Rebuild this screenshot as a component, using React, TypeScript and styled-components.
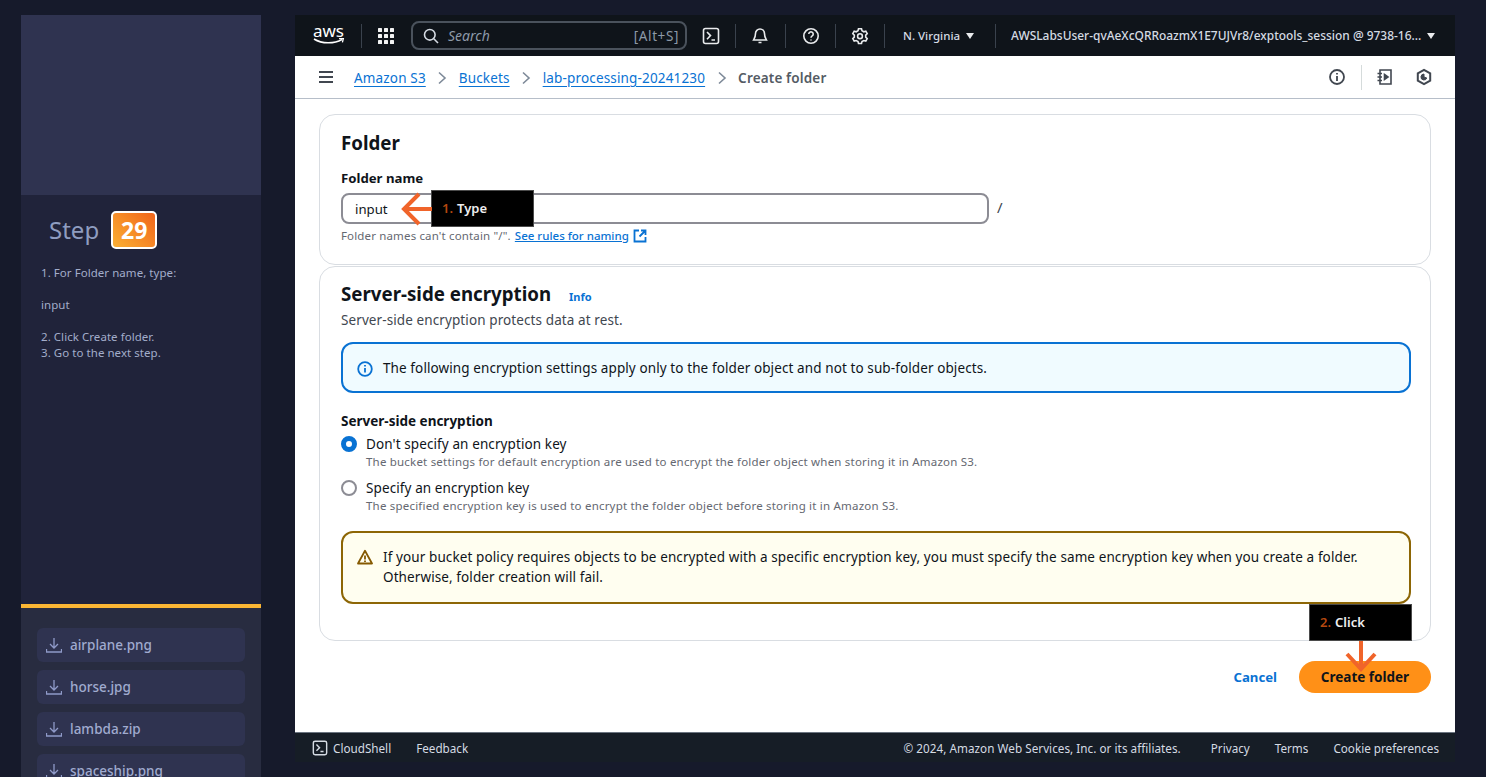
import React from "react";
import styled, { createGlobalStyle } from "styled-components";

const Global = createGlobalStyle`
  html, body { margin: 0; padding: 0; height: 100%; background: #161a2b; overflow: hidden; }
  body { font-family: "Noto Sans", "Open Sans", sans-serif; }
  * { box-sizing: border-box; }
`;

const Page = styled.div`
  display: flex; gap: 34px; height: 777px; overflow: hidden; padding: 15px 31px 0 21px;
`;
const Sidebar = styled.aside`
  width: 240px; flex: none; display: flex; flex-direction: column; height: 790px;
`;
const Banner = styled.div`height: 180px; flex: none; background: #2f3350;`;
const StepPanel = styled.section`
  height: 409px; flex: none; background: #20233a; padding: 16px 20px 0 20px; color: #9aa5c4;
`;
const StepHead = styled.div`display: flex; align-items: center; gap: 12px; padding-left: 8px; height: 38px;`;
const StepWord = styled.span`font-size: 24px; color: #8f9dc0; line-height: 38px;`;
const StepBadge = styled.span`
  width: 46px; height: 38px; border: 2px solid #fff; border-radius: 5px;
  background: linear-gradient(45deg, #fbb034, #f0641a);
  color: #fff; font-weight: 700; font-size: 23px; display: flex; align-items: center; justify-content: center;
`;
const StepLines = styled.div`margin-top: 16px; font-size: 11.5px; letter-spacing: .05px; line-height: 16px; color: #a3adca;`;
const StepLine = styled.div<{ $gap?: boolean }>`margin-bottom: ${p => (p.$gap ? 16 : 0)}px;`;
const FilePanel = styled.section`
  flex: 1; background: #282c40; border-top: 4px solid #fbb634; padding: 20px 16px 0;
  display: flex; flex-direction: column; gap: 8px;
`;
const FileRow = styled.div`
  height: 34px; flex: none; border-radius: 6px; background: #2f3350; display: flex; align-items: center;
  gap: 8px; padding-left: 9px; color: #a0abcf; font-size: 13.5px; font-weight: 500;
`;
const Main = styled.main`
  width: 1160px; flex: none; display: flex; flex-direction: column; height: 747px; position: relative;
`;
const TopNav = styled.header`
  height: 41px; flex: none; background: #0f141a; display: flex; align-items: center; color: #d5dbe3;
`;
const Logo = styled.div`
  width: 33px; margin-left: 17px; display: flex; flex-direction: column; align-items: center;
  color: #fff; font-size: 17px; line-height: 14px; position: relative; top: -1px;
`;
const NavRule = styled.span<{ $h?: number; $m?: string }>`
  width: 1px; height: ${p => p.$h ?? 24}px; background: #3a424d; margin: ${p => p.$m ?? "0"}; flex: none;
`;
const SearchBox = styled.div`
  width: 276px; height: 29px; border: 2px solid #4a525c; border-radius: 8px; background: #0f141a;
  display: flex; align-items: center; padding: 0 6px 0 10px; gap: 9px; margin-left: 17px; margin-right: 15px;
`;
const SearchPh = styled.span`font-style: italic; font-size: 14px; color: #8d99a8; flex: 1;`;
const SearchKey = styled.span`font-size: 13.5px; letter-spacing: .6px; color: #8d99a8;`;
const NavIconBox = styled.span`display: flex; width: 18px; height: 18px; flex: none; color: #e9ebed;`;
const Region = styled.span<{ $wide?: boolean }>`
  font-size: ${p => (p.$wide ? 11.95 : 11.5)}px; font-weight: 500; color: #d5dbe3; white-space: nowrap;
`;
const Caret = styled.span`
  width: 0; height: 0; border-left: 4.5px solid transparent; border-right: 4.5px solid transparent;
  border-top: 6px solid #e9ebed; flex: none; margin-left: 6px;
`;
const Content = styled.div`
  flex: none; height: 676px; background: #fff; display: flex; flex-direction: column; position: relative;
`;
const CrumbBar = styled.div`
  height: 43px; flex: none; border-bottom: 1px solid #b6bec9; display: flex; align-items: center; padding: 0 22px 0 23px;
`;
const Crumbs = styled.nav`
  display: flex; align-items: center; margin-left: 20px; flex: 1; font-size: 13.5px; letter-spacing: .16px; padding-top: 1px;
`;
const Crumb = styled.a`color: #0972d3; text-decoration: underline; text-underline-offset: 3px; white-space: nowrap;`;
const CrumbCurrent = styled.span`color: #545b64; font-weight: 600; white-space: nowrap;`;
const CrumbSep = styled.span`display: flex; width: 33px; justify-content: center; color: #7d8998;`;
const BarTools = styled.div`display: flex; align-items: center; gap: 14px; color: #414750;`;
const ToolIcon = styled.span<{ $ml?: number; $mr?: number }>`
  display: flex; width: 18px; height: 18px; margin-left: ${p => p.$ml ?? 0}px; margin-right: ${p => p.$mr ?? 0}px;
`;
const ToolRule = styled.span`width: 1px; height: 25px; background: #d5dbdb;`;
const Body = styled.div`padding: 15px 24px 0; display: flex; flex-direction: column; flex: 1;`;
const Card = styled.section<{ $h: number; $top: number }>`
  height: ${p => p.$h}px; flex: none; border: 1px solid #d9dde2; border-radius: 16px; padding: ${p => p.$top}px 21px 0;
  margin-bottom: 1px; color: #0f141a;
`;
const CardTitle = styled.h2`margin: 0; font-size: 18.7px; line-height: 26px; font-weight: 700; color: #0f141a;`;
const TitleRow = styled.div`display: flex; align-items: baseline; gap: 18px;`;
const InfoLink = styled.a`color: #0972d3; font-size: 11px; font-weight: 700;`;
const FieldLabel = styled.div`font-size: 13.2px; line-height: 16px; font-weight: 700; color: #0f141a; margin-top: 14px;`;
const InputRow = styled.div`display: flex; align-items: center; gap: 8px; margin-top: 7px; position: relative;`;
const NameInput = styled.div`
  width: 648px; height: 31px; border: 2px solid #8c8c94; border-radius: 8px; display: flex; align-items: center;
  padding-left: 12px; font-size: 13.2px; color: #0f141a;
`;
const Slash = styled.span`font-size: 15px; color: #414750; position: relative; top: -2px;`;
const Hint = styled.div`margin-top: 5px; font-size: 11.5px; letter-spacing: .15px; line-height: 14px; color: #656871; display: flex; align-items: center; gap: 4px;`;
const HintLink = styled.a`color: #0972d3; text-decoration: underline; font-weight: 500; letter-spacing: 0;`;
const Desc = styled.p`margin: 4px 0 0; font-size: 13.5px; letter-spacing: .1px; line-height: 18px; color: #414750;`;
const Alert = styled.div<{ $warn?: boolean }>`
  width: 1070px; margin-top: ${p => (p.$warn ? 17 : 13)}px; height: ${p => (p.$warn ? 73 : 51)}px;
  border: 2px solid ${p => (p.$warn ? "#8d6605" : "#0972d3")}; border-radius: 12px;
  background: ${p => (p.$warn ? "#fffef0" : "#f0fbff")};
  display: flex; align-items: ${p => (p.$warn ? "flex-start" : "center")}; gap: 10px;
  padding: ${p => (p.$warn ? "14px" : "0")} 14px 0 14px; font-size: 13.5px; letter-spacing: .1px; line-height: 20px; color: #0f141a;
`;
const AlertIcon = styled.span`display: flex; width: 16px; height: 16px; flex: none; margin-top: 2px;`;
const GroupLabel = styled.div`font-size: 13.5px; line-height: 16px; font-weight: 700; margin-top: 20px; color: #0f141a;`;
const RadioRow = styled.div<{ $first?: boolean }>`
  display: flex; gap: 9px; margin-top: ${p => (p.$first ? 5 : 8)}px;
`;
const Radio = styled.span<{ $on?: boolean }>`
  width: 16px; height: 16px; border-radius: 50%; flex: none; margin-top: 2px; background: #fff;
  border: ${p => (p.$on ? "5px solid #0972d3" : "2px solid #8c8c94")};
`;
const RadioText = styled.div`display: flex; flex-direction: column;`;
const RadioTitle = styled.span`font-size: 13.5px; letter-spacing: .1px; line-height: 20px; color: #0f141a;`;
const RadioHelp = styled.span`font-size: 11.5px; letter-spacing: .2px; line-height: 16px; color: #656871; white-space: nowrap;`;
const Actions = styled.div`display: flex; justify-content: flex-end; align-items: center; gap: 22px; margin-top: 19px;`;
const Cancel = styled.a`color: #0972d3; font-size: 13.2px; font-weight: 700;`;
const Primary = styled.button`
  width: 132px; height: 32px; border: 0; border-radius: 16px; background: #ff9017; color: #0f141a;
  font: 700 13.5px "Noto Sans", sans-serif; padding: 0;
`;
const Footer = styled.footer`
  height: 30px; flex: none; background: #161d26; border-top: 1px solid #6b7480; display: flex; align-items: center;
  padding: 0 16px 0 17px; font-size: 11.7px; color: #d5dbe3; white-space: nowrap;
`;
const FooterShell = styled.span`display: flex; align-items: center; gap: 5px; margin-right: 25px;`;
const Spacer = styled.span`flex: 1;`;
const Copyright = styled.span`letter-spacing: .04px;`;
const FooterItem = styled.span<{ $m?: number }>`margin-left: ${p => p.$m ?? 0}px;`;
const Callout = styled.div<{ $x: number; $y: number; $h: number; $w: number }>`
  position: absolute; left: ${p => p.$x}px; top: ${p => p.$y}px; width: ${p => p.$w}px; height: ${p => p.$h}px;
  background: #000; border: 1px solid #4b4b4b; color: #eee; font-size: 13px; font-weight: 600;
  display: flex; align-items: center; padding: 0 0 2px 10px; gap: 4px; z-index: 3;
`;
const CalloutNum = styled.span`color: #b5480f;`;
const ArrowSvg = styled.svg<{ $x: number; $y: number }>`
  position: absolute; left: ${p => p.$x}px; top: ${p => p.$y}px; z-index: 4; overflow: visible;
`;

const ShellIcon = ({ size = 18 }: { size?: number }) => (
  <svg width={size} height={size} viewBox="0 0 18 18" fill="none" stroke="currentColor" strokeWidth="1.6">
    <rect x="1.5" y="1.5" width="15" height="15" rx="2" />
    <path d="M5 5l3.5 3.6L5 12.2M9.5 13h3.5" />
  </svg>
);
const DownloadIcon = () => (
  <svg width="16" height="16" viewBox="0 0 16 16" fill="none" stroke="#8f9ac8" strokeWidth="1.3">
    <path d="M8 1v9.500M4 7l4 4 4-4M.5 12v3h15v-3" />
  </svg>
);
const Sep = () => (
  <CrumbSep>
    <svg width="10" height="14" viewBox="0 0 10 14" fill="none" stroke="currentColor" strokeWidth="1.6"><path d="M2 1.500 8 7l-6 5.500" /></svg>
  </CrumbSep>
);
const files = ["airplane.png", "horse.jpg", "lambda.zip", "spaceship.png"];

export default function App() {
  return (
    <>
      <Global />
      <Page>
        <Sidebar>
          <Banner />
          <StepPanel>
            <StepHead>
              <StepWord>Step</StepWord>
              <StepBadge>29</StepBadge>
            </StepHead>
            <StepLines>
              <StepLine $gap>1. For Folder name, type:</StepLine>
              <StepLine $gap>input</StepLine>
              <StepLine>2. Click Create folder.</StepLine>
              <StepLine>3. Go to the next step.</StepLine>
            </StepLines>
          </StepPanel>
          <FilePanel>
            {files.map(f => (
              <FileRow key={f}><DownloadIcon />{f}</FileRow>
            ))}
          </FilePanel>
        </Sidebar>
        <Main>
          <TopNav>
            <Logo>
              aws
              <svg width="32" height="7" viewBox="0 0 32 7" fill="none">
                <path d="M1 1c8 5 20 5 28 .5" stroke="#fff" strokeWidth="1.6" />
                <path d="M26 .6l4.400-.2-1 4" stroke="#fff" strokeWidth="1.3" />
              </svg>
            </Logo>
            <NavRule $m="0 16px 0 16px" />
            <svg width="16" height="16" viewBox="0 0 16 16" fill="#f2f3f3" style={{ flex: "none" }}>
              {[0, 6, 12].flatMap(y => [0, 6, 12].map(x => <rect key={`${x}-${y}`} x={x} y={y} width="4" height="4" rx=".6" />))}
            </svg>
            <SearchBox>
              <svg width="16" height="16" viewBox="0 0 16 16" fill="none" stroke="#d5dbe3" strokeWidth="1.6" style={{ flex: "none" }}>
                <circle cx="6.800" cy="6.800" r="5.300" /><path d="m10.800 10.800 4.200 4.200" />
              </svg>
              <SearchPh>Search</SearchPh>
              <SearchKey>[Alt+S]</SearchKey>
            </SearchBox>
            <NavIconBox><ShellIcon /></NavIconBox>
            <NavRule $m="0 15px 0 15px" />
            <NavIconBox>
              <svg width="18" height="18" viewBox="0 0 18 18" fill="none" stroke="currentColor" strokeWidth="1.6">
                <path d="M9 2a4.500 4.500 0 0 0-4.500 4.500c0 4-1.500 5.500-2 6.500h13c-.5-1-2-2.500-2-6.500A4.500 4.500 0 0 0 9 2zM7.500 15.500h3" />
              </svg>
            </NavIconBox>
            <NavRule $m="0 16px 0 16px" />
            <NavIconBox>
              <svg width="18" height="18" viewBox="0 0 18 18" fill="none" stroke="currentColor" strokeWidth="1.6">
                <circle cx="9" cy="9" r="7.200" /><path d="M6.800 7a2.200 2.200 0 1 1 3.400 1.900C9.400 9.400 9 9.900 9 10.800M9 12.400v1.200" />
              </svg>
            </NavIconBox>
            <NavRule $m="0 15px 0 15px" />
            <NavIconBox>
              <svg width="18" height="18" viewBox="0 0 18 18" fill="none" stroke="currentColor" strokeWidth="1.600">
                <path d="M7.500 1.800h3l.5 2 1.800 1 2-.6 1.400 2.500-1.500 1.500v1.900l1.500 1.500-1.400 2.500-2-.6-1.800 1-.5 2h-3l-.5-2-1.800-1-2 .6-1.400-2.500 1.500-1.500V8.200L1.800 6.700l1.400-2.500 2 .6 1.800-1z" />
                <circle cx="9" cy="9.200" r="2.400" />
              </svg>
            </NavIconBox>
            <NavRule $m="0 18px 0 15px" />
            <Region>N. Virginia</Region>
            <Caret />
            <NavRule $m="0 15px 0 21px" />
            <Region $wide>AWSLabsUser-qvAeXcQRRoazmX1E7UJVr8/exptools_session @ 9738-16...</Region>
            <Caret />
          </TopNav>
          <Content>
            <CrumbBar>
              <svg width="16" height="14" viewBox="0 0 16 14" stroke="#414750" strokeWidth="2" style={{ flex: "none" }}>
                <path d="M1 2h14M1 7h14M1 12h14" />
              </svg>
              <Crumbs>
                <Crumb>Amazon S3</Crumb><Sep />
                <Crumb>Buckets</Crumb><Sep />
                <Crumb>lab-processing-20241230</Crumb><Sep />
                <CrumbCurrent>Create folder</CrumbCurrent>
              </Crumbs>
              <BarTools>
                <ToolIcon $mr={1}>
                  <svg width="18" height="18" viewBox="0 0 18 18" fill="none" stroke="currentColor" strokeWidth="1.800">
                    <circle cx="9" cy="9" r="7" /><path d="M9 8v5M9 5v1.500" />
                  </svg>
                </ToolIcon>
                <ToolRule />
                <ToolIcon>
                  <svg width="18" height="18" viewBox="0 0 18 18" fill="none" stroke="currentColor" strokeWidth="1.600">
                    <path d="M4 2h11v14H4zM1.500 5.500H6M1.500 9H6M1.500 12.500H6" /><path d="M8.500 6.500 12 9l-3.500 2.500z" fill="currentColor" />
                  </svg>
                </ToolIcon>
                <ToolIcon $ml={7}>
                  <svg width="18" height="18" viewBox="0 0 18 18" fill="none" stroke="currentColor" strokeWidth="2">
                    <path d="M9 1.800 15.200 5.400v7.200L9 16.200l-6.200-3.600V5.400z" /><path d="M9 6a3 3 0 1 0 2.800 4L9 9z" fill="currentColor" strokeWidth="1" />
                  </svg>
                </ToolIcon>
              </BarTools>
            </CrumbBar>
            <Body>
              <Card $h={151} $top={15}>
                <CardTitle>Folder</CardTitle>
                <FieldLabel>Folder name</FieldLabel>
                <InputRow>
                  <NameInput>input</NameInput>
                  <Slash>/</Slash>
                </InputRow>
                <Hint>
                  <span>Folder names can't contain "/".</span>
                  <HintLink>See rules for naming</HintLink>
                  <svg width="14" height="14" viewBox="0 0 14 14" fill="none" stroke="#0972d3" strokeWidth="1.800">
                    <path d="M6 1.500H1.500v11h11V8M8 1.500h4.500V6M12.500 1.500 6.500 7.500" />
                  </svg>
                </Hint>
              </Card>
              <Card $h={375} $top={14}>
                <TitleRow>
                  <CardTitle>Server-side encryption</CardTitle>
                  <InfoLink>Info</InfoLink>
                </TitleRow>
                <Desc>Server-side encryption protects data at rest.</Desc>
                <Alert>
                  <AlertIcon>
                    <svg width="16" height="16" viewBox="0 0 16 16" fill="none" stroke="#0972d3" strokeWidth="1.800">
                      <circle cx="8" cy="8" r="6.800" /><path d="M8 7v4.500M8 4v1.600" />
                    </svg>
                  </AlertIcon>
                  <span>The following encryption settings apply only to the folder object and not to sub-folder objects.</span>
                </Alert>
                <GroupLabel>Server-side encryption</GroupLabel>
                <RadioRow $first>
                  <Radio $on />
                  <RadioText>
                    <RadioTitle>Don't specify an encryption key</RadioTitle>
                    <RadioHelp>The bucket settings for default encryption are used to encrypt the folder object when storing it in Amazon S3.</RadioHelp>
                  </RadioText>
                </RadioRow>
                <RadioRow>
                  <Radio />
                  <RadioText>
                    <RadioTitle>Specify an encryption key</RadioTitle>
                    <RadioHelp>The specified encryption key is used to encrypt the folder object before storing it in Amazon S3.</RadioHelp>
                  </RadioText>
                </RadioRow>
                <Alert $warn>
                  <AlertIcon>
                    <svg width="16" height="16" viewBox="0 0 16 16" fill="none" stroke="#855900" strokeWidth="1.800">
                      <path d="M8 1.800 15 14.500H1z" strokeLinejoin="round" /><path d="M8 6.500v4M8 11.500v1.500" />
                    </svg>
                  </AlertIcon>
                  <span>If your bucket policy requires objects to be encrypted with a specific encryption key, you must specify the same encryption key when you create a folder.<br />Otherwise, folder creation will fail.</span>
                </Alert>
              </Card>
              <Actions>
                <Cancel>Cancel</Cancel>
                <Primary>Create folder</Primary>
              </Actions>
            </Body>
            <Callout $x={136} $y={134} $w={103} $h={37}><CalloutNum>1.</CalloutNum> Type</Callout>
            <ArrowSvg $x={106} $y={136} width="32" height="34" viewBox="0 0 32 34" fill="none" stroke="#f0642a" strokeWidth="4">
              <path d="M31 17H3M18 2 3 17l15 15" />
            </ArrowSvg>
            <Callout $x={1014} $y={548} $w={103} $h={37}><CalloutNum>2.</CalloutNum> Click</Callout>
            <ArrowSvg $x={1050} $y={585} width="32" height="32" viewBox="0 0 32 32" fill="none" stroke="#f0642a" strokeWidth="4">
              <path d="M16 0v28M2 13l14 15 14-15" />
            </ArrowSvg>
          </Content>
          <Footer>
            <FooterShell><ShellIcon size={16} />CloudShell</FooterShell>
            <span>Feedback</span>
            <Spacer />
            <Copyright>© 2024, Amazon Web Services, Inc. or its affiliates.</Copyright>
            <FooterItem $m={30}>Privacy</FooterItem>
            <FooterItem $m={25}>Terms</FooterItem>
            <FooterItem $m={25}>Cookie preferences</FooterItem>
          </Footer>
        </Main>
      </Page>
    </>
  );
}
